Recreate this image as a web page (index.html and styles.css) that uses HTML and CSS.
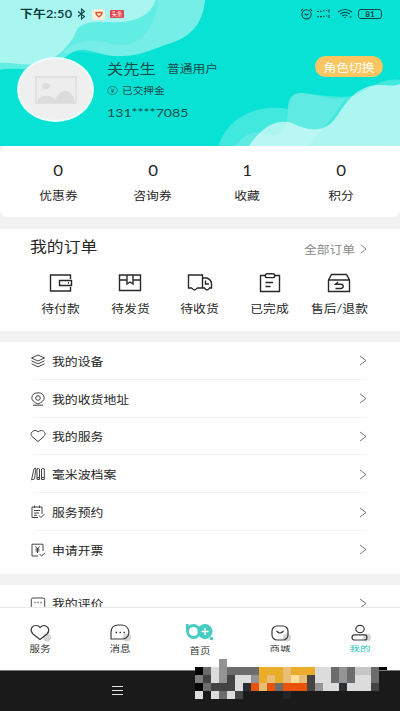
FILE: index.html
```html
<!DOCTYPE html>
<html lang="zh-CN">
<head>
<meta charset="utf-8">
<title>我的</title>
<link rel="stylesheet" href="styles.css">
</head>
<body>
<div class="app">
  <header class="hero">
    <svg class="waves" width="400" height="156" viewBox="0 0 400 156">
      <path d="M0 0H205C203 24 190 38 168 44C150 50 140 56 122 56C105 57 100 52 85 50C68 48 66 64 45 67C25 71 12 67 0 70Z" fill="#fff" opacity=".36"/>
      <path d="M0 0H156C150 15 138 21 120 22C105 23 88 19 78 28C70 46 58 60 36 64C22 66 10 62 0 63Z" fill="#fff" opacity=".46"/>
      <path d="M62 54C72 41 90 38 108 43C135 50 154 36 158 0H205C203 24 190 38 168 44C150 50 140 56 122 56C105 57 80 48 62 54Z" fill="#fff" opacity=".12"/>
      <path d="M216 156C222 118 256 103 288 109C288 98 293 92 303 93C325 96 350 100 362 92C377 83 387 78 400 80V156Z" fill="#fff" opacity=".23"/>
      <path d="M235 146C245 133 258 129 267 135C280 138 287 132 288 109C288 98 293 92 303 93C325 96 336 102 347 97L330 120L300 156H235Z" fill="#fff" opacity=".16"/>
      <path d="M243 156C258 128 275 118 292 123C309 132 324 132 334 120C344 107 349 94 367 87C380 82 390 88 400 84V156Z" fill="#fff" opacity=".57"/>
    </svg>
    <div class="status">
      <span class="clock t">下午2:50</span>
      <svg class="bt" width="9" height="12" viewBox="0 0 9 12"><path d="M1 3.5L7.5 8.5L4.5 11V1L7.5 3.5L1 8.5"/></svg>
      <span class="badge heart"><svg width="8" height="7" viewBox="0 0 8 7"><path d="M1 1.5H7Q7 4 4 5.8Q1 4 1 1.5Z"/></svg></span>
      <span class="badge news">头条</span>
      <span class="gap"></span>
      <svg class="alarm" width="13" height="12" viewBox="0 0 13 12"><circle cx="6.5" cy="6.3" r="4.6"/><path d="M1 2.8L3 .9M12 2.8L10 .9M4.5 5.8L6.5 7L8.5 5.8"/></svg>
      <svg class="signal" width="15" height="12" viewBox="0 0 15 12"><path d="M1 3.5h2M4 3.2h2M7 2.8h1.6M10 2.5h1.3M13 1.5v3M1 8.8h2M4 8.6h2M7 8.2h1.6M10 8h1.3M13 7v3"/></svg>
      <svg class="wifi" width="16" height="12" viewBox="0 0 16 12"><path d="M1 4Q8-1 15 4M3.2 6Q8 2.4 12.8 6M5.3 8Q8 6 10.5 8M7.2 9.5h1.6M12.5 9h2"/></svg>
      <span class="battery">81</span>
    </div>
    <div class="profile">
      <div class="avatar">
        <svg width="42" height="28" viewBox="0 0 42 28"><rect x="1" y="1" width="40" height="26" fill="#ededed" stroke="#dedede" stroke-width="1.6"/><ellipse cx="11" cy="10" rx="4" ry="3.3" fill="#dcdcdc"/><path d="M3 27V23Q11 16 20 23Q29 9 37 19L39 21V27Z" fill="#dcdcdc"/></svg>
      </div>
      <div class="who">
        <div class="line name-line"><span class="name t">关先生</span><span class="role t">普通用户</span></div>
        <div class="line deposit"><svg width="11" height="9" viewBox="0 0 11 9"><ellipse cx="5.5" cy="4.5" rx="4.9" ry="4"/><path d="M3.8 2.5L5.5 4.3L7.2 2.5M5.5 4.3V7M4 4.5h3M4 5.7h3"/></svg><span class="t">已交押金</span></div>
        <div class="line phone"><span class="t">131****7085</span></div>
      </div>
      <button class="switch"><span class="t">角色切换</span></button>
    </div>
  </header>

  <section class="stats">
    <div class="stat"><b class="t">0</b><span class="t">优惠券</span></div>
    <div class="stat"><b class="t">0</b><span class="t">咨询券</span></div>
    <div class="stat"><b class="t">1</b><span class="t">收藏</span></div>
    <div class="stat"><b class="t">0</b><span class="t">积分</span></div>
  </section>

  <section class="orders">
    <div class="orders-head">
      <h2 class="t">我的订单</h2>
      <span class="all"><span class="t">全部订单</span><svg width="7" height="10" viewBox="0 0 7 10"><path d="M.8.8L6 5L.8 9.2"/></svg></span>
    </div>
    <div class="order-grid">
      <div class="order"><svg width="24" height="20" viewBox="0 0 24 20"><path d="M21.5 6V2H1.5V18H21.5V14M10.500 7.500H22.500V12.500H10.500Z"/><path d="M19 10h1"/></svg><span class="t">待付款</span></div>
      <div class="order"><svg width="24" height="20" viewBox="0 0 24 20"><path d="M1.500 2H22.500V17.500H1.500ZM1.500 7H9M15 7H22.500M9 2V11L12 9L15 11V2"/></svg><span class="t">待发货</span></div>
      <div class="order"><svg width="26" height="20" viewBox="0 0 26 20"><path d="M5 15H1.500V2H15.500V15H10M15.500 5H20Q24.500 7 24.500 11V15H22M18 15H15.500M18.500 7.500V11H22"/><path d="M5 15Q7.500 19 10 15M17.500 15Q20 19 22.500 15"/></svg><span class="t">待收货</span></div>
      <div class="order"><svg width="22" height="20" viewBox="0 0 22 20"><path d="M6.500 2.500H1.500V18.500H20.500V2.500H15.500M6.500 9.500H14M6.500 13.500H11.500"/><rect x="6.300" y=".8" width="9.400" height="3.800" rx="1.900"/></svg><span class="t">已完成</span></div>
      <div class="order"><svg width="24" height="20" viewBox="0 0 24 20"><path d="M1.500 7L4.500 1.500H19.500L22.500 7V18.500H1.500ZM1.500 7H22.500M11 9L8.500 11.200H14Q16.500 11.500 16.200 13.500Q16 15.500 13.500 15.500H8.500"/></svg><span class="t">售后/退款</span></div>
    </div>
  </section>

  <section class="menu">
    <div class="row"><svg class="ic" width="16" height="14" viewBox="0 0 16 14"><path d="M8 1L14.500 4L8 7L1.500 4ZM1.500 6.800L8 9.800L14.500 6.800M1.500 9.800L8 12.800L14.500 9.800"/></svg><span class="t">我的设备</span><svg class="arrow" width="8" height="11" viewBox="0 0 8 11"><path d="M1 1L7 5.500L1 10"/></svg></div>
    <div class="row"><svg class="ic" width="16" height="14" viewBox="0 0 16 14"><path d="M3 13.200H13M8 12Q1.800 9.500 1.800 5.800C2 2.500 4.500.8 8 .8S14 2.500 14.200 5.800Q14.200 9.500 8 12Z"/><circle cx="8" cy="6" r="2.300"/></svg><span class="t">我的收货地址</span><svg class="arrow" width="8" height="11" viewBox="0 0 8 11"><path d="M1 1L7 5.500L1 10"/></svg></div>
    <div class="row"><svg class="ic" width="16" height="14" viewBox="0 0 16 14"><path d="M8 12.500L2 7.500C-.5 4.500 2.500 1.500 5 1.500Q7 1.500 8 3Q9.500 1.500 11.500 1.500C14.500 1.800 16.200 5 14 7.500Z"/></svg><span class="t">我的服务</span><svg class="arrow" width="8" height="11" viewBox="0 0 8 11"><path d="M1 1L7 5.500L1 10"/></svg></div>
    <div class="row"><svg class="ic" width="16" height="14" viewBox="0 0 16 14"><path d="M4 2Q5 .8 6 1.500L4.500 12L1.500 12.800ZM7 2Q8.300.5 9.500 2V12.500H7ZM11.500 2Q12.800.5 14.300 2V12.500H11.500ZM7 10.500h2.500M11.500 10.500h2.800"/></svg><span class="t">毫米波档案</span><svg class="arrow" width="8" height="11" viewBox="0 0 8 11"><path d="M1 1L7 5.500L1 10"/></svg></div>
    <div class="row"><svg class="ic" width="16" height="14" viewBox="0 0 16 14"><path d="M12 9V2H2V12.500H8M4.500.5V3M9.500.5V3M4 5.500H10M4 8H9M4 10.300H7M9 10.500L11 12.500L14.500 9"/></svg><span class="t">服务预约</span><svg class="arrow" width="8" height="11" viewBox="0 0 8 11"><path d="M1 1L7 5.500L1 10"/></svg></div>
    <div class="row"><svg class="ic" width="16" height="14" viewBox="0 0 16 14"><path d="M13 8V1.200H2V13H8M9.500 11L11.500 13L15 10M5.500 3.500L7.500 6L9.500 3.500M7.500 6V10M5.500 6.200h4M5.500 8h4"/></svg><span class="t">申请开票</span><svg class="arrow" width="8" height="11" viewBox="0 0 8 11"><path d="M1 1L7 5.500L1 10"/></svg></div>
  </section>

  <section class="menu more">
    <div class="row"><svg class="ic" width="16" height="14" viewBox="0 0 16 14"><path d="M3.500 12H3Q1.300 12 1.300 10.500V3.500Q1.300 2 3 2H13Q14.700 2 14.700 3.500V10.500Q14.700 12 13 12H8L6 13"/><path d="M4.500 6.500h1M7.500 6.500h1M10.500 6.500h1" stroke-width="1.500"/></svg><span class="t">我的评价</span><svg class="arrow" width="8" height="11" viewBox="0 0 8 11"><path d="M1 1L7 5.500L1 10"/></svg></div>
  </section>

  <nav class="tabs">
    <div class="tab"><svg width="24" height="18" viewBox="0 0 24 18"><circle class="shade" cx="19" cy="13.500" r="4"/><path d="M12 15.500L5 10C1 6 4 1.500 8 1.500Q11 1.500 12 3.500Q14 1.500 16 1.500C21 2 22 7 19 10Z"/></svg><span class="t">服务</span></div>
    <div class="tab"><svg width="24" height="18" viewBox="0 0 24 18"><circle class="shade" cx="19" cy="13.500" r="4"/><path d="M3 15V8Q3.500 1 10 1H14Q20 1.500 21 8Q20.500 14.500 15 15Z"/><path d="M7.500 8.500h1.500M11.500 8.500h1.500M15.500 8.500h1.500" stroke-width="1.500"/></svg><span class="t">消息</span></div>
    <div class="tab home"><svg width="30" height="18" viewBox="0 0 30 18"><g class="brand"><path d="M2.300 1V8.500"/><circle cx="8.500" cy="8.500" r="6"/><circle cx="20" cy="8.500" r="7.500" class="disc"/><circle cx="26.500" cy="15.500" r="1.800" class="disc"/></g><path class="plus" d="M16.500 8.500h7M20 5V12"/></svg><span class="t">首页</span></div>
    <div class="tab flat"><svg width="24" height="18" viewBox="0 0 24 18"><circle class="shade" cx="19" cy="13.500" r="4"/><rect x="4" y="2" width="16" height="14" rx="5"/><path d="M8.500 7Q12 11 15.500 7"/></svg><span class="t">商城</span></div>
    <div class="tab flat active"><svg width="24" height="18" viewBox="0 0 24 18"><circle class="shade" cx="19" cy="13.500" r="4"/><ellipse cx="12" cy="5" rx="4.200" ry="3.700"/><rect x="4" y="10.800" width="15" height="5.200" rx="2.600"/></svg><span class="t">我的</span></div>
  </nav>

  <footer class="sysbar">
    <svg width="12" height="10" viewBox="0 0 12 10"><path d="M0 .5h11M0 4.500h11M0 8.500h11"/></svg>
    <svg class="mosaic" width="192" height="40" viewBox="0 0 24 5" shape-rendering="crispEdges">
      <path fill="#000" d="M0 1h1v1h-1zM23 1h1v.4h-1zM0 3h1v1h-1z"/>
      <path fill="#949494" d="M3 0h1v1h-1zM3 1h1v1h-1zM7 2h1v1h-1zM18 1h1v1h-1zM3 2h1v1h-1zM15 3h1v1h-1zM18 2h1v1h-1z"/>
      <path fill="#6c6c6c" d="M1 1h1v1h-1zM4 1h4v1h-4zM17 1h1v2h-1zM19 1h1v2h-1zM22 1h1v2h-1zM1 3h1v1h-1zM3 4h1v1h-1zM10 3h1v1h-1z"/>
      <path fill="#444" d="M1 2h1v1h-1zM4 2h1v2h-1zM2 3h2v1h-2zM14 2h1v2h-1zM5 4h1v1h-1zM22 3h1v1h-1z"/>
      <path fill="#dcdcdc" d="M2 1h1v2h-1zM15 1h2v2h-2zM5 2h2v1h-2zM5 3h1v1h-1zM20 2h2v1h-2zM16 3h2v1h-2zM19 3h3v1h-3zM0 4h1v1h-1zM2 4h1v1h-1zM4 4h1v1h-1z"/>
      <path fill="#c6c6c6" d="M20 1h2v1h-2z"/>
      <path fill="#808080" d="M0 2h1v1h-1z"/>
      <path fill="#2c2f31" d="M6 3h1v1h-1zM18 3h1v1h-1z"/>
      <path fill="#eaad29" d="M8 1h3v1h-3zM12 1h3v1h-3zM8 2h1v1h-1zM10 2h1v1h-1z"/>
      <path fill="#e8bd77" d="M11 1h1v1h-1zM9 2h1v1h-1zM11 2h1v1h-1zM13 2h1v1h-1zM8 3h1v1h-1z"/>
      <path fill="#ffdf9b" d="M12 2h1v1h-1z"/>
      <path fill="#e95208" d="M7 3h1v1h-1zM9 3h1v1h-1zM11 3h3v1h-3z"/>
      <path fill="#1c242c" d="M11 4h1v1h-1z"/>
    </svg>
  </footer>
</div>
</body>
</html>
```
FILE: styles.css
```css
* { box-sizing: border-box; }
body {
  margin: 0;
  background: #f2f2f2;
  color: #262626;
  font-family: Lato, "Noto Sans CJK SC", sans-serif;
}
.app { display: flex; flex-direction: column; width: 400px; height: 711px; overflow: hidden; }
svg { display: block; flex: none; fill: none; }

/* wide glyphs */
.t { display: inline-block; white-space: nowrap; transform: scaleX(1.16); transform-origin: left center; }

.hero { position: relative; height: 146px; flex: none; background: #08e2d5; }
.waves { position: absolute; left: 0; top: 0; }
.status { position: relative; display: flex; align-items: center; height: 28px; padding: 0 18px 0 20px; color: #083b39; }
.status svg { stroke: #0b4a47; stroke-width: 1.1; }
.clock { width: 57px; font-size: 11px; font-weight: 600; line-height: 28px; letter-spacing: .2px; }
.badge { display: flex; align-items: center; justify-content: center; }
.heart { width: 13px; height: 11px; margin-left: 6px; border-radius: 3px; background: #f6efe0; }
.heart svg { stroke: #e4572e; stroke-width: 1.4; }
.news { width: 14px; height: 8px; margin-left: 5px; border-radius: 1px; background: #e2434c; color: #fff; font-size: 5.500px; line-height: 8px; }
.gap { flex: 1; }
.alarm { margin-right: -2px; }
.signal { margin-left: 5px; }
.wifi { margin-left: 6px; }
.battery { width: 24px; height: 10px; margin-left: 5px; border: 1px solid #0b4a47; border-radius: 3px; font: 700 8px/8px Lato, sans-serif; text-align: center; }

.profile { position: relative; display: flex; padding: 29px 17px 0; }
.avatar { display: flex; align-items: center; justify-content: center; width: 77px; height: 65px; border: 2px solid #e9fffd; border-radius: 50%; background: #efefef; }
.who { flex: 1; padding-left: 13px; color: #114e4a; }
.line { display: flex; align-items: center; }
.name-line { height: 22px; }
.name { width: 60px; font-size: 14px; }
.role { font-size: 11px; }
.deposit { height: 22px; gap: 4px; font-size: 9.200px; }
.deposit svg { stroke: #176b66; stroke-width: .7; }
.phone { height: 23px; font-size: 12.200px; }
.switch { display: flex; align-items: center; justify-content: center; width: 68px; height: 21px; margin: -1px 0 0; padding: 0; border: 0; border-radius: 11px; background: #fac661; color: #fff; font: 11px "Noto Sans CJK SC", sans-serif; }

.stats { position: relative; display: flex; flex: none; height: 71px; padding: 0 11.500px; border-radius: 8px; background: #fff; }
.stat { display: flex; flex: 1; flex-direction: column; align-items: center; padding-top: 14px; }
.stat b { height: 24px; font-weight: 400; font-size: 14.500px; line-height: 22px; }
.stat span { font-size: 11px; line-height: 24px; }
.stat .t, .order .t, .tab .t, .switch .t { transform-origin: center; }

.orders { flex: none; height: 102px; margin-top: 12px; background: #fff; }
.orders-head { display: flex; justify-content: space-between; height: 38px; padding: 0 33px 0 30px; }
h2 { margin: 0; font-size: 14.500px; font-weight: 400; line-height: 35px; }
.all { display: flex; align-items: center; height: 40px; color: #8a8a8a; font-size: 11px; }
.all .t { transform-origin: right center; }
.all svg { margin-left: 5px; stroke: #8a8a8a; }
.order-grid { display: flex; padding: 6px 26px 0; }
.order { display: flex; flex: 1; flex-direction: column; align-items: center; font-size: 11px; line-height: 18px; }
.order svg { margin-bottom: 7px; stroke: #282828; stroke-width: 1.4; }

.menu { flex: none; height: 232px; margin-top: 11px; padding: 0 33px 0 30px; background: #fff; }
.row { position: relative; display: flex; align-items: center; height: 37.800px; font-size: 11.100px; }
.row:not(:last-child)::after { content: ""; position: absolute; left: 4px; right: 0; bottom: 0; height: 1px; background: #f3f3f3; }
.ic { margin-right: 6px; stroke: #3b3b3b; stroke-width: .95; }
.arrow { margin-left: auto; stroke: #777; }
.more { height: 22px; overflow: hidden; }
.more .row { height: 36px; }

.tabs { display: flex; flex: none; height: 63px; border-top: 1px solid #e9e9e9; background: #fff; }
.tab { display: flex; flex: 1; flex-direction: column; align-items: center; padding-top: 16px; font-size: 9px; line-height: 14px; color: #333; }
.tab svg { stroke: #3b3b3b; stroke-width: 1.200; }
.tab .shade { fill: #d5d5d5; stroke: none; }
.home { padding-top: 15px; }
.home .t { margin-top: 3px; clip-path: inset(0 0 2px); }
.brand { stroke: #47ccc3; stroke-width: 2.800; }
.brand .disc { fill: #47ccc3; stroke: none; }
.home .plus { stroke: #fff; stroke-width: 1.500; }
.flat .t { margin-top: 0; transform: scale(1.160, .72); }
.active .t { color: #1fc5bb; }

.sysbar { position: relative; flex: none; height: 41px; padding: 15px 0 0 112px; border-top: 1px solid #777; background: #1a1a1a; }
.sysbar > svg:first-child { stroke: #e5e5e5; stroke-width: 1; }
.mosaic { position: absolute; left: 195px; top: -12px; }
```
